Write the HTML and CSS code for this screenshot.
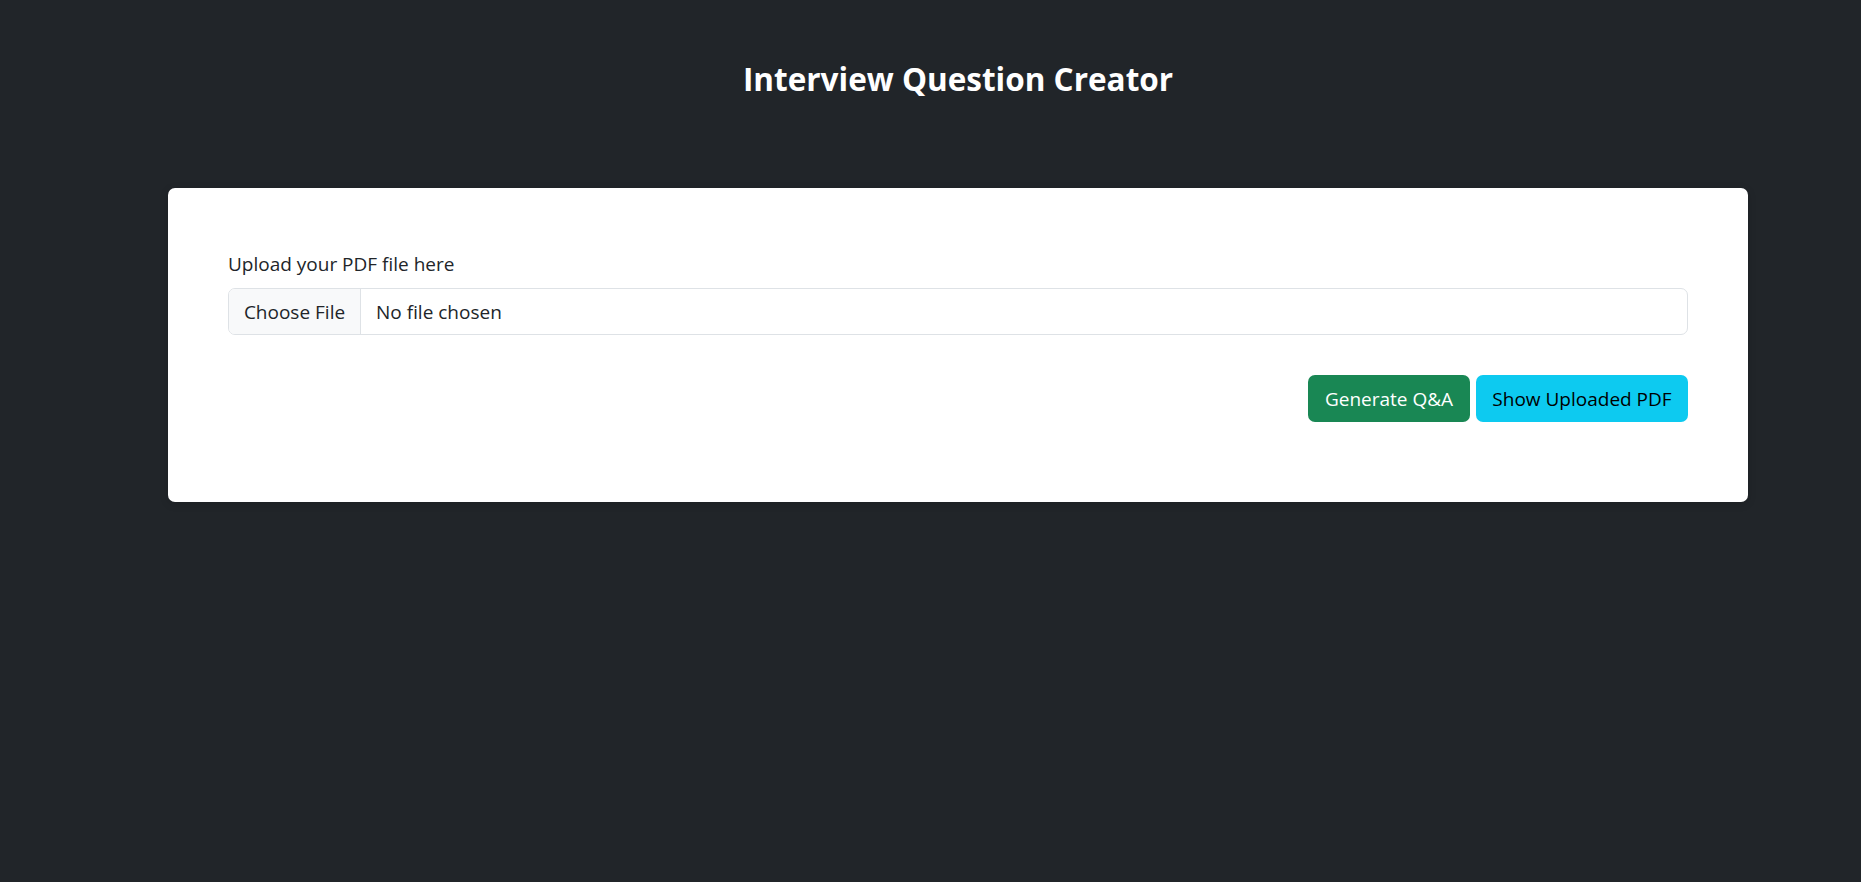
FILE: index.html
```html
<!DOCTYPE html>
<html lang="en">
<head>
<meta charset="utf-8">
<title>Interview Question Creator</title>
<link rel="stylesheet" href="styles.css">
</head>
<body>
<div class="page">
  <h2 class="title">Interview Question Creator</h2>
  <div class="card">
    <label class="label">Upload your PDF file here</label>
    <div class="file-input">
      <span class="file-btn">Choose File</span>
      <span class="file-name">No file chosen</span>
    </div>
    <div class="actions">
      <button class="btn btn-success">Generate Q&amp;A</button>
      <button class="btn btn-info">Show Uploaded PDF</button>
    </div>
  </div>
</div>
</body>
</html>
```
FILE: styles.css
```css
* { box-sizing: border-box; }
html, body { margin: 0; padding: 0; }
body {
  background: #212529;
  font-family: "Segoe UI", "Open Sans", "Noto Sans", sans-serif;
  color: #212529;
  height: 882px;
}
.page {
  padding-left: 168px;
  width: 1748px;
}
.title {
  margin: 0;
  padding-top: 56px;
  height: 188px;
  text-align: center;
  color: #fff;
  font-weight: 700;
  font-size: 31.5px;
  line-height: 46px;
}
.card {
  background: #fff;
  border-radius: 7px;
  padding: 62px 60px 80px 60px;
  box-shadow: 0 2px 8px rgba(0,0,0,0.15);
}
.label {
  display: block;
  font-size: 19px;
  line-height: 29px;
  margin-bottom: 9px;
  color: #212529;
}
.file-input {
  display: flex;
  height: 47px;
  border: 1px solid #dee2e6;
  border-radius: 7px;
  overflow: hidden;
  font-size: 19px;
}
.file-btn {
  width: 132px;
  background: #f8f9fa;
  border-right: 1px solid #dee2e6;
  display: flex;
  align-items: center;
  justify-content: center;
  padding-top: 1px;
}
.file-name {
  display: flex;
  align-items: center;
  padding-left: 15px;
  padding-top: 1px;
}
.actions {
  display: flex;
  justify-content: flex-end;
  gap: 6px;
  margin-top: 40px;
}
.btn {
  font-family: inherit;
  font-size: 19px;
  height: 47px;
  border: none;
  border-radius: 7px;
  padding: 0 16px;
}
.btn-success { background: #198754; color: #fff; width: 162px; }
.btn-info { background: #0dcaf0; color: #000; width: 212px; }
```
